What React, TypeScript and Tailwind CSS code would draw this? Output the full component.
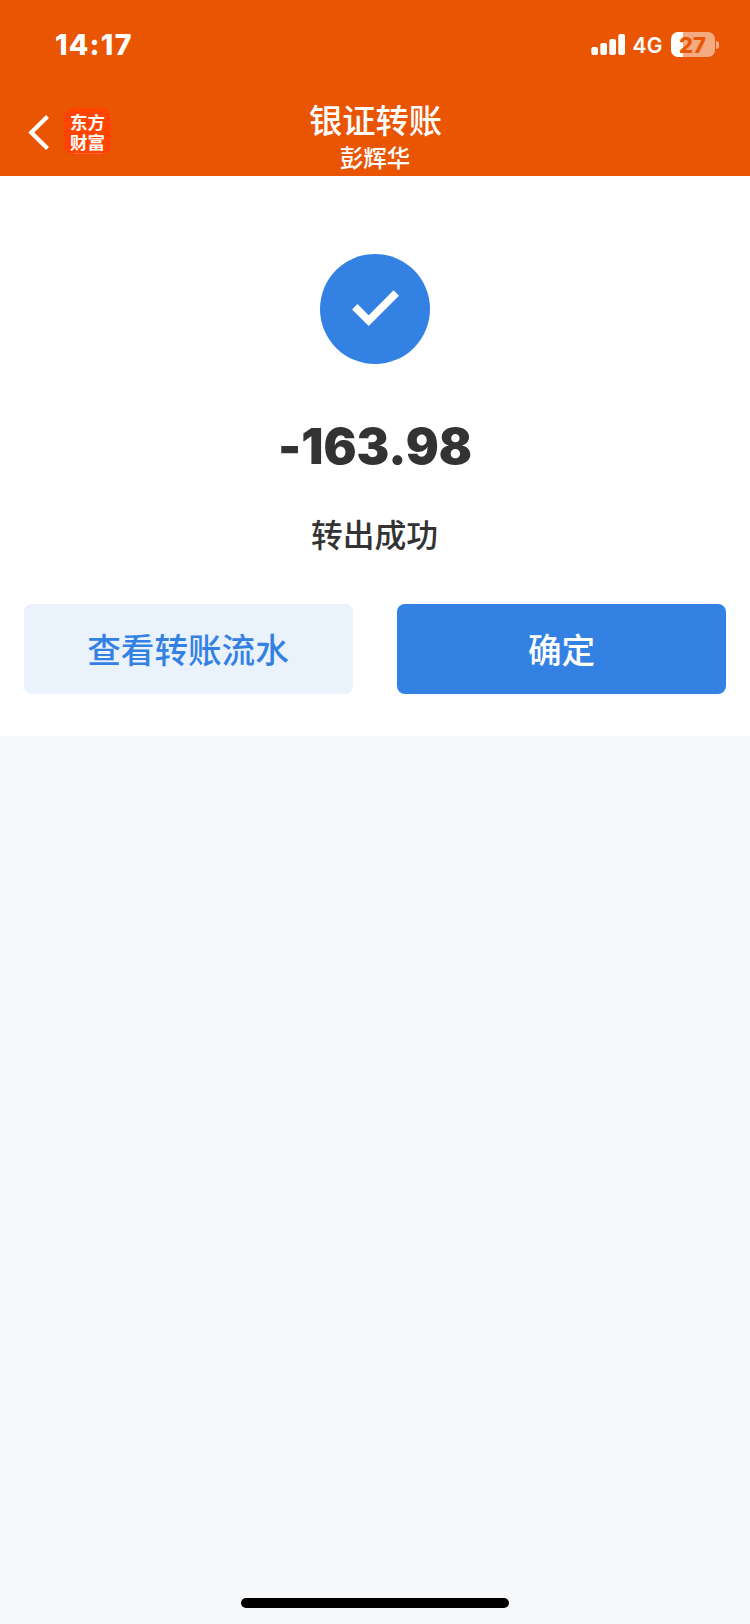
function StatusBar() {
  return (
    <div className="flex h-[88px] items-start justify-between pl-[55px] pr-[31px]">
      <span className="mt-[28px] font-[Inter] text-[28.500px] leading-[34px] font-extrabold tracking-[1.2px]">14:17</span>
      <div className="mt-[32px] flex h-[25px] items-center">
        <svg className="h-[25px] w-[36px]" viewBox="0 0 36 25" fill="currentColor" aria-hidden="true">
          <rect x="0.3" y="15" width="6.7" height="8" rx="2" />
          <rect x="9.3" y="11" width="6.7" height="12" rx="2" />
          <rect x="18.3" y="7" width="6.7" height="16" rx="2" />
          <rect x="27.3" y="2" width="6.7" height="21" rx="2" />
        </svg>
        <span className="mt-[2px] ml-[6px] w-[31px] font-[Inter] text-[21px] leading-[25px] font-semibold tracking-[0.3px]">4G</span>
        <div className="ml-[7px] flex h-[25px] w-[44px] items-center justify-center rounded-[7px] bg-[linear-gradient(to_right,#fff_12px,#f5ab82_12px)] pt-[1px] font-[Inter] text-[22px] leading-[24px] font-extrabold text-[#ea5504]">
          27
        </div>
        <div className="ml-[1.5px] h-[8px] w-[3px] rounded-r-full bg-[#f5ab82]" />
      </div>
    </div>
  );
}

function NavBar() {
  return (
    <div className="grid h-[88px] grid-cols-3">
      <div className="flex items-start pt-[20px] pl-[28px]">
        <svg className="mt-[5px] h-[40px] w-[24px]" viewBox="0 0 24 40" fill="none" stroke="currentColor" strokeWidth="4.2" aria-hidden="true">
          <path d="M19.500 3.500 3.300 19.500l16.200 16" />
        </svg>
        <div className="ml-[12px] flex h-[47px] w-[47px] flex-col items-center rounded-[10px] bg-[#ff4400] pt-[4px] text-[17.500px] leading-[20px] font-bold">
          <p className="w-[35px] text-center break-all">东方财富</p>
          <span className="mt-[1px] h-px w-[30px] bg-[#ff6a3a]" />
        </div>
      </div>
      <div className="flex flex-col items-center whitespace-nowrap">
        <h1 className="mt-[11px] pl-[1px] text-[33.300px] leading-[40px] font-medium">银证转账</h1>
        <p className="text-[23.500px] leading-[36px] font-medium">彭辉华</p>
      </div>
    </div>
  );
}

export default function App() {
  return (
    <div className="flex h-[1624px] w-[750px] flex-col bg-[#f6f8fa] font-['Noto_Sans_CJK_SC',sans-serif]">
      <header className="h-[176px] bg-[#ea5504] text-white">
        <StatusBar />
        <NavBar />
      </header>
      <main className="flex h-[560px] flex-col items-center bg-white px-[24px] pt-[78px] text-[#333333]">
        <svg className="h-[110px] w-[110px] shrink-0" viewBox="0 0 110 110" aria-hidden="true">
          <circle cx="55" cy="55" r="55" fill="#3481e4" />
          <path d="M34.800 52.800 48.700 66.700 76.300 39" fill="none" stroke="#fff" strokeWidth="7.600" />
        </svg>
        <p className="mt-[53px] font-[Inter] text-[49px] leading-[60px] font-black [font-feature-settings:'calt'_0]">-163.98</p>
        <p className="mt-[33px] pr-[1px] text-[31.800px] leading-[46px] font-medium">转出成功</p>
        <div className="mt-[48px] grid w-full grid-cols-2 gap-[44px]">
          <button className="h-[90px] rounded-[8px] bg-[#eaf2fc] pr-[1px] text-[33.600px] font-medium text-[#3481e4]">查看转账流水</button>
          <button className="h-[90px] rounded-[8px] bg-[#3481e4] text-[33.600px] font-medium text-white">确定</button>
        </div>
      </main>
      <div className="mt-auto mb-[16px] h-[10px] w-[268px] self-center rounded-full bg-black" />
    </div>
  );
}
